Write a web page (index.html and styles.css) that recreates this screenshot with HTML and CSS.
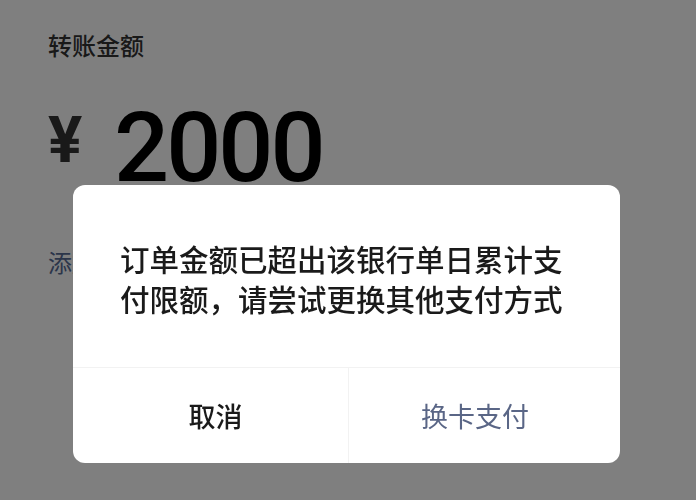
FILE: index.html
```html
<!DOCTYPE html>
<html>
<head>
  <title>转账</title>
  <meta name="viewport" content="width=device-width, initial-scale=1.0">
  <link rel="stylesheet" href="styles.css">
</head>
<body>
  <div class="page">
    <div class="label">转账金额</div>

    <div class="amount">
      <span class="currency">¥</span>
      <span class="value">2000</span>
    </div>

    <a class="note" href="#">添加转账说明</a>
  </div>

  <!-- limit warning shown over the transfer page -->
  <div class="mask">
    <div class="dialog">
      <div class="dialog-msg">订单金额已超出该银行单日累计支付限额，请尝试更换其他支付方式</div>
      <div class="dialog-actions">
        <a class="btn btn-cancel" href="#">取消</a>
        <a class="btn btn-primary" href="#">换卡支付</a>
      </div>
    </div>
  </div>
</body>
</html>
```

FILE: styles.css
```css
body {
  margin: 0;
  padding: 0;
  background: #fff;
  font-family: "Noto Sans CJK SC", "Noto Sans", sans-serif;
  color: #333;
}
a {
  text-decoration: none;
}

.page {
  height: 500px;
  padding: 33px 0 0 48px;
  box-sizing: border-box;
}

.label {
  font-size: 24px;
  line-height: 24px;
  font-weight: 500;
  color: #333;
}

/* big number row */
.amount {
  display: flex;
  align-items: flex-start;
  margin-top: 43px;
}
.currency {
  font-family: Roboto, sans-serif;
  font-weight: 700;
  font-size: 64px;
  line-height: 1;
  margin-top: 9px;
  width: 66px;
}
.value {
  font-family: Roboto, sans-serif;
  font-weight: 500;
  font-size: 97px;
  line-height: 1;
  letter-spacing: -3px;
  color: #000;
}

.note {
  display: block;
  margin-top: 53px;
  font-size: 24px;
  line-height: 24px;
  color: #576b95;
}

/* dimmed layer + dialog */
.mask {
  position: fixed;
  top: 0;
  left: 0;
  right: 0;
  bottom: 0;
  background: rgba(0, 0, 0, 0.5);
}
.dialog {
  position: absolute;
  left: 73px;
  top: 185px;
  width: 547px;
  height: 278px;
  background: #fff;
  border-radius: 12px;
  display: flex;
  flex-direction: column;
  overflow: hidden;
}
.dialog-msg {
  padding: 53px 40px 49px 47px;
  font-size: 29.5px;
  line-height: 40px;
  font-weight: 500;
  color: #1a1a1a;
}
.dialog-actions {
  flex: 1;
  display: flex;
  border-top: 1px solid #f2f2f2;
}
.btn {
  display: flex;
  align-items: center;
  justify-content: center;
  font-size: 27px;
}
.btn-cancel {
  flex: 0 0 265px;
  padding-left: 10px;
  color: #1a1a1a;
  font-weight: 500;
}
.btn-primary {
  flex: 1;
  padding-right: 19px;
  border-left: 1px solid #f2f2f2;
  color: #5a6686;
}
```
